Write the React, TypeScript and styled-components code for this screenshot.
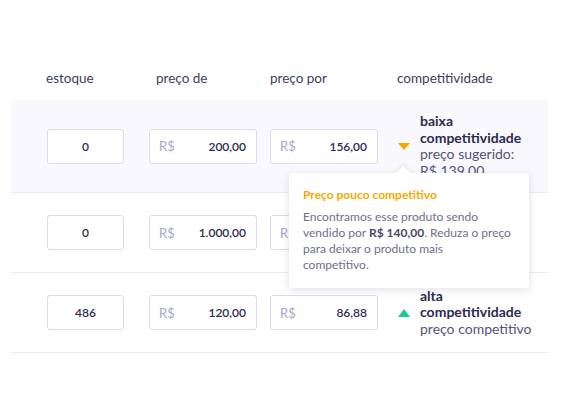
import styled, { createGlobalStyle } from "styled-components";

const GlobalStyle = createGlobalStyle`
  body {
    margin: 0;
    background: #fff;
    font-family: Lato, "Noto Sans", sans-serif;
    color: #3e3d5c;
  }
`;

type Level = "low" | "medium" | "high";

interface Product {
  stock: string;
  priceFrom: string;
  priceTo: string;
  level: Level;
  title: string[];
  hint: string[];
  highlighted?: boolean;
}

const products: Product[] = [
  {
    stock: "0",
    priceFrom: "200,00",
    priceTo: "156,00",
    level: "low",
    title: ["baixa", "competitividade"],
    hint: ["preço sugerido:", "R$ 139,00"],
    highlighted: true,
  },
  {
    stock: "0",
    priceFrom: "1.000,00",
    priceTo: "899,00",
    level: "medium",
    title: ["média", "competitividade"],
    hint: ["preço sugerido:"],
  },
  {
    stock: "486",
    priceFrom: "120,00",
    priceTo: "86,88",
    level: "high",
    title: ["alta", "competitividade"],
    hint: ["preço competitivo"],
  },
];

export default function App() {
  return (
    <>
      <GlobalStyle />
      <Table>
        <HeaderRow>
          <HeaderLabel $indent={-1}>estoque</HeaderLabel>
          <HeaderLabel $indent={7}>preço de</HeaderLabel>
          <HeaderLabel>preço por</HeaderLabel>
          <HeaderLabel>competitividade</HeaderLabel>
        </HeaderRow>

        {products.map((p, i) => (
          <Row key={i} $highlighted={p.highlighted}>
            <StockBox>{p.stock}</StockBox>
            <PriceBox>
              <Currency>R$</Currency>
              <Amount>{p.priceFrom}</Amount>
            </PriceBox>
            <PriceBox>
              <Currency>R$</Currency>
              <Amount>{p.priceTo}</Amount>
            </PriceBox>
            <Competitiveness>
              <Indicator $level={p.level} />
              <CompText>
                {p.title.map((t) => (
                  <strong key={t}>{t}</strong>
                ))}
                {p.hint.map((t) => (
                  <span key={t}>{t}</span>
                ))}
              </CompText>
            </Competitiveness>

            {p.level === "low" && (
              <Tooltip>
                <TooltipTitle>Preço pouco competitivo</TooltipTitle>
                <TooltipBody>
                  Encontramos esse produto sendo
                  <br />
                  vendido por <b>R$ 140,00</b>. Reduza o preço
                  <br />
                  para deixar o produto mais
                  <br />
                  competitivo.
                </TooltipBody>
              </Tooltip>
            )}
          </Row>
        ))}
      </Table>
    </>
  );
}

const Table = styled.div`
  margin-left: 11px;
  width: 537px;
`;

const columns = `
  display: grid;
  grid-template-columns: 102px 121px 127px 1fr;
  padding-left: 36px;
`;

const HeaderRow = styled.div`
  ${columns}
  height: 100px;
  padding-top: 68px;
  box-sizing: border-box;
`;

const HeaderLabel = styled.div<{ $indent?: number }>`
  font-size: 13.5px;
  line-height: 20px;
  color: #3e3d5c;
  margin-left: ${(p) => p.$indent ?? 0}px;
`;

const Row = styled.div<{ $highlighted?: boolean }>`
  ${columns}
  position: relative;
  align-items: center;
  min-height: 80px;
  padding-top: 13px;
  padding-bottom: 13px;
  box-sizing: border-box;
  background: ${(p) => (p.$highlighted ? "#f8f8fd" : "#fff")};
  border-bottom: 1px solid #ebeaf4;
`;

const Field = styled.div`
  height: 35px;
  box-sizing: border-box;
  border: 1.5px solid #dcdbea;
  border-radius: 3px;
  background: #fff;
  display: flex;
  align-items: center;
  font-size: 12px;
  font-weight: 600;
  color: #2d2b4f;
`;

const StockBox = styled(Field)`
  width: 77px;
  justify-content: center;
`;

const PriceBox = styled(Field)`
  width: 108px;
  justify-content: space-between;
  padding: 0 10px 0 9px;
`;

const Currency = styled.span`
  font-size: 13px;
  font-weight: 400;
  color: #a9a8c7;
`;

const Amount = styled.span``;

const Competitiveness = styled.div`
  display: flex;
  align-items: center;
  gap: 10px;
  padding-left: 1px;
`;

const Indicator = styled.span<{ $level: Level }>`
  width: 0;
  height: 0;
  border-left: 6px solid transparent;
  border-right: 6px solid transparent;
  ${(p) =>
    p.$level === "high"
      ? "border-bottom: 8px solid #1ec98b;"
      : "border-top: 7px solid #f5a700;"}
`;

const CompText = styled.div`
  display: flex;
  flex-direction: column;
  font-size: 14px;
  line-height: 16.5px;

  strong {
    font-weight: 700;
    color: #2d2b4f;
  }

  span {
    color: #55537a;
  }
`;

const Tooltip = styled.div`
  position: absolute;
  left: 278px;
  top: 73px;
  z-index: 2;
  width: 240px;
  box-sizing: border-box;
  padding: 14px 14px 15px;
  background: #fff;
  border-radius: 3px;
  box-shadow: 0 2px 10px rgba(45, 43, 90, 0.14);

  &::before {
    content: "";
    position: absolute;
    top: -5px;
    left: 109px;
    width: 10px;
    height: 10px;
    background: #fff;
    transform: rotate(45deg);
    box-shadow: -2px -2px 4px rgba(45, 43, 90, 0.06);
  }
`;

const TooltipTitle = styled.div`
  position: relative;
  font-size: 12px;
  line-height: 16px;
  font-weight: 700;
  color: #f5a700;
  margin-bottom: 6px;
`;

const TooltipBody = styled.div`
  font-size: 12px;
  line-height: 16px;
  color: #6f6e8c;
  white-space: nowrap;

  b {
    font-weight: 700;
    color: #4a4868;
  }
`;
